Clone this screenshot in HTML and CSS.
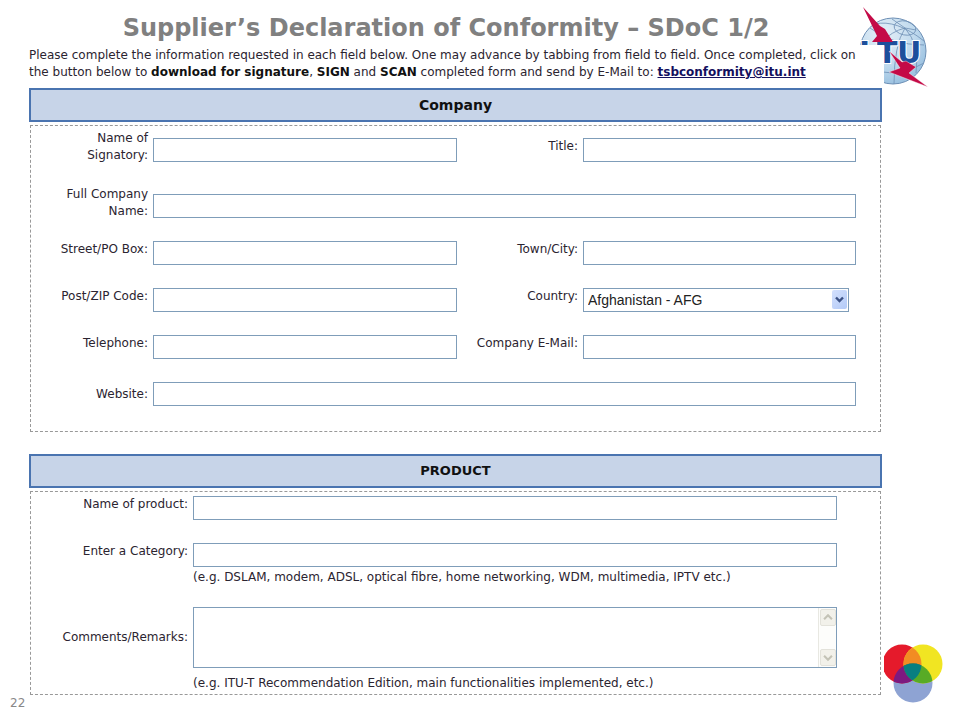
FILE: index.html
```html
<!DOCTYPE html>
<html lang="en">
<head>
<meta charset="utf-8">
<title>Supplier’s Declaration of Conformity</title>
<link rel="stylesheet" href="styles.css">
</head>
<body>
<svg class="itu-logo" viewBox="0 0 72 84" role="img" aria-label="ITU">
  <defs>
    <radialGradient id="globe" cx="0.35" cy="0.25" r="0.8">
      <stop offset="0" stop-color="#e6f0f8"/>
      <stop offset="0.6" stop-color="#bfd9ed"/>
      <stop offset="1" stop-color="#97bfdf"/>
    </radialGradient>
  </defs>
  <circle cx="35" cy="46" r="33" fill="url(#globe)" stroke="#6d8fb5"/>
  <g fill="none" stroke="#6d8fb5" stroke-width="0.8">
    <ellipse cx="47" cy="23" rx="11" ry="7" transform="rotate(12 47 23)"/>
    <path d="M17 19Q38 14 66 36M47 23Q36 40 36 79M47 23Q20 30 8 65M47 23Q62 40 58 68M47 23L34 14M47 23L58 25M12 23Q34 40 66 40M3 57Q30 78 66 58"/>
  </g>
  <g class="itu-letters">
    <text x="1" y="58">I</text><text x="19" y="58">T</text><text x="39" y="58">U</text>
  </g>
  <path d="M5 2L22 21L27 24L35 37L14 37L19 31Z" fill="#c40a47"/>
  <path d="M31 46L44 57L48 56L58 62L51 68L70 82L31 67L42 63Z" fill="#c40a47" stroke="#fff" stroke-width="0.4"/>
</svg>
<svg class="rings" viewBox="0 0 60 60" aria-hidden="true">
  <defs>
    <clipPath id="in-red"><circle cx="21" cy="22" r="19.5"/></clipPath>
    <clipPath id="in-yellow"><circle cx="42" cy="22" r="19.5"/></clipPath>
  </defs>
  <circle cx="32" cy="41" r="19.5" fill="#8ea3d3"/>
  <circle cx="21" cy="22" r="19.5" fill="#e51a2b"/>
  <circle cx="42" cy="22" r="19.5" fill="#f1e522"/>
  <circle cx="42" cy="22" r="19.5" fill="#f28c23" clip-path="url(#in-red)"/>
  <circle cx="32" cy="41" r="19.5" fill="#7d1a80" clip-path="url(#in-red)"/>
  <g clip-path="url(#in-yellow)">
    <circle cx="32" cy="41" r="19.5" fill="#58ab26"/>
    <circle cx="32" cy="41" r="19.5" fill="#087f80" clip-path="url(#in-red)"/>
  </g>
</svg>

<h1>Supplier’s Declaration of Conformity – SDoC 1/2</h1>

<form class="sheet">
  <p class="intro">Please complete the information requested in each field below. One may advance by tabbing from field to field. Once completed, click on the button below to <b>download for signature</b>, <b>SIGN</b> and <b>SCAN</b> completed form and send by E-Mail to: <a href="mailto:tsbconformity@itu.int">tsbconformity@itu.int</a></p>

  <h2 class="large">Company</h2>
  <section class="panel company">
    <div class="row tall">
      <label for="signatory">Name of Signatory:</label><input id="signatory" type="text">
      <label for="title">Title:</label><input id="title" type="text">
    </div>
    <div class="row">
      <label for="company">Full Company Name:</label><input class="wide" id="company" type="text">
    </div>
    <div class="row">
      <label for="street">Street/PO Box:</label><input id="street" type="text">
      <label for="town">Town/City:</label><input id="town" type="text">
    </div>
    <div class="row">
      <label for="zip">Post/ZIP Code:</label><input id="zip" type="text">
      <label for="country">Country:</label>
      <div class="select">
        <select id="country"><option>Afghanistan - AFG</option></select>
        <svg class="drop" viewBox="0 0 15 19" aria-hidden="true"><path d="M4 7.5L7.5 11L11 7.5" fill="none" stroke="#3c5285" stroke-width="2.4"/></svg>
      </div>
    </div>
    <div class="row">
      <label for="phone">Telephone:</label><input id="phone" type="text">
      <label for="email">Company E-Mail:</label><input id="email" type="text">
    </div>
    <div class="row level">
      <label for="website">Website:</label><input class="wide" id="website" type="text">
    </div>
  </section>

  <h2>PRODUCT</h2>
  <section class="panel product">
    <label for="product">Name of product:</label><input id="product" type="text">
    <label for="category">Enter a Category:</label>
    <input id="category" type="text">
    <p class="hint">(e.g. DSLAM, modem, ADSL, optical fibre, home networking, WDM, multimedia, IPTV etc.)</p>
    <label class="mid" for="remarks">Comments/Remarks:</label>
    <div class="area">
      <textarea id="remarks"></textarea>
      <div class="scroll" aria-hidden="true">
        <svg viewBox="0 0 16 17"><path d="M3.5 10.5L8 6L12.5 10.5" fill="none" stroke="#c4c3b6" stroke-width="2.4"/></svg>
        <svg viewBox="0 0 16 17"><path d="M3.5 6.5L8 11L12.5 6.5" fill="none" stroke="#c4c3b6" stroke-width="2.4"/></svg>
      </div>
    </div>
    <p class="hint last">(e.g. ITU-T Recommendation Edition, main functionalities implemented, etc.)</p>
  </section>
</form>
<footer>22</footer>
</body>
</html>
```
FILE: styles.css
```css
* { box-sizing: border-box; }

body {
  position: relative;
  margin: 0;
  background: #fff;
  color: #2b2430;
  font: 12px/17px "DejaVu Sans", Verdana, sans-serif;
}

h1 {
  margin: 0 68px 0 0;
  padding-top: 11px;
  height: 45px;
  color: #808080;
  font-size: 24px;
  line-height: 34px;
  text-align: center;
}

.itu-logo {
  position: absolute;
  top: 5px;
  right: 30px;
  width: 72px;
  height: 84px;
}

.itu-letters {
  fill: #1d4f9c;
  stroke: #fff;
  stroke-width: 2px;
  paint-order: stroke;
  font: bold 30px "DejaVu Sans", sans-serif;
}

.rings {
  position: absolute;
  top: 642px;
  right: 19px;
  width: 60px;
  height: 60px;
  overflow: visible;
}

.sheet {
  position: relative;
  margin: 0 76px 0 28px;
  padding: 2px 2px 0 1px;
  background: #fff;
}

.intro {
  margin: 0 0 7px;
  padding-right: 16px;
}

.intro b { color: #111; }
.intro a { color: #14105e; font-weight: bold; }

h2 {
  margin: 0 0 3px;
  border: 2px solid #4a74b0;
  background: #c7d4e8;
  color: #111;
  font-size: 13px;
  line-height: 30px;
  text-align: center;
}

.large { font-size: 14px; }

.panel {
  margin: 0 1px;
  border: 1px dashed #999;
}

.company {
  margin-bottom: 22px;
  padding: 0 24px 14px 0;
}

.row {
  display: grid;
  grid-template-columns: 117px 304fr 116px 273fr;
  column-gap: 5px;
  align-items: center;
  min-height: 47px;
}

.tall { margin-bottom: 9px; }
.wide { grid-column: 2 / -1; }

label {
  padding-bottom: 6px;
  text-align: right;
}

.row label:first-child { padding-left: 20px; }
.level label { padding: 2px 0 0; }

input, textarea, select {
  display: block;
  width: 100%;
  height: 24px;
  margin: 0;
  padding: 0 4px;
  border: 1px solid #7f9db9;
  border-radius: 0;
  outline: 0;
  background: #fff;
  color: #222;
  font: 14px "Liberation Sans", Arial, sans-serif;
}

.select {
  position: relative;
  margin-right: 7px;
}

select { appearance: none; }

.drop {
  position: absolute;
  top: 2px;
  right: 2px;
  width: 15px;
  height: 19px;
  border-radius: 2px;
  background: linear-gradient(135deg, #d3e0fd, #b3caf7);
  pointer-events: none;
}

.product {
  display: grid;
  grid-template-columns: 157px 1fr;
  column-gap: 5px;
  padding: 4px 43px 2px 0;
}

.product input { margin-bottom: 23px; }
.product #category { margin-bottom: 2px; }

.hint {
  grid-column: 2;
  margin: 0 0 21px;
}

.last { margin: 7px 0 0; }
.product .mid { align-self: center; padding: 0; }
.area { position: relative; }

textarea {
  height: 61px;
  resize: none;
}

.scroll {
  position: absolute;
  top: 1px;
  right: 1px;
  bottom: 1px;
  display: flex;
  flex-direction: column;
  justify-content: space-between;
  width: 18px;
  padding: 1px;
  border-left: 1px solid #e8e8e2;
  background: #fdfdfb;
}

.scroll svg {
  width: 16px;
  height: 17px;
  border: 1px solid #e3e2da;
  border-radius: 2px;
  background: #f2f1ea;
}

footer {
  padding: 0 0 0 10px;
  color: #888;
}
```
